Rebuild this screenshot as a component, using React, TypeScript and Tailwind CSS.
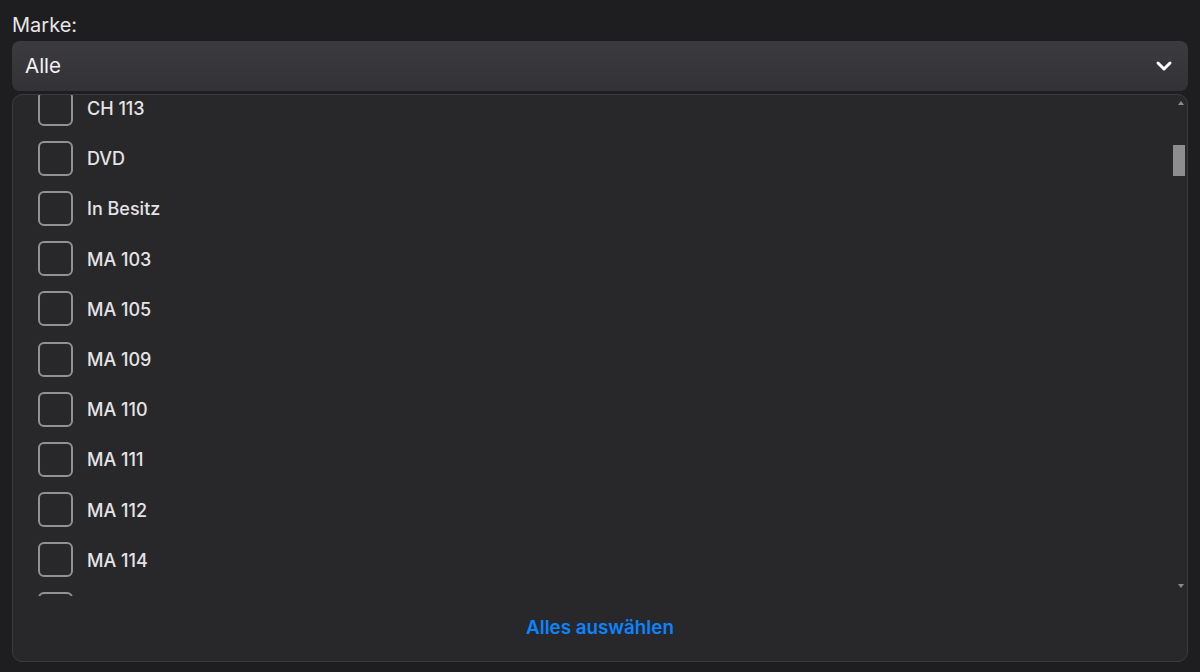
import { ChevronDown } from 'lucide-react';

const items = ['CH 113', 'DVD', 'In Besitz', 'MA 103', 'MA 105', 'MA 109', 'MA 110', 'MA 111', 'MA 112', 'MA 114', ''];

export default function App() {
  return (
    <div className="min-h-screen bg-[#1e1e20] px-3 pt-[13px] font-['Inter',sans-serif]">
      <label className="block text-[20px] leading-[24px] text-[#e6e6e8] mb-[4px]">Marke:</label>

      <button className="w-full h-[50px] rounded-[8px] bg-gradient-to-b from-[#3b3a3f] to-[#333237] flex items-center justify-between pl-[13px] pr-[12px] text-[20.5px] text-[#f2f2f4]">
        <span className="pt-[1px]">Alle</span>
        <ChevronDown size={24} strokeWidth={3} className="text-white" />
      </button>

      <div className="mt-[3px] rounded-[10px] border border-[#3b3b3e] bg-[#28282a] overflow-hidden">
        <div className="relative h-[501px] overflow-hidden">
          <ul className="mt-[-12px] pl-[25px]">
            {items.map((item, i) => (
              <li key={i} className="h-[50.2px] flex items-center gap-[14px]">
                <span className="w-[35px] h-[35px] rounded-[6px] border-2 border-[#929296] shrink-0" />
                {item && <span className="text-[18px] font-medium text-[#e4e4e6] pt-[1px]">{item}</span>}
              </li>
            ))}
          </ul>
          {/* scrollbar */}
          <div className="absolute right-[3px] top-[6px] w-0 h-0 border-l-[3px] border-r-[3px] border-b-[4px] border-l-transparent border-r-transparent border-b-[#8a8a8c]" />
          <div className="absolute right-[2px] top-[50px] w-[12px] h-[31px] bg-[#8d8d8f]" />
          <div className="absolute right-[3px] bottom-[8px] w-0 h-0 border-l-[3px] border-r-[3px] border-t-[4px] border-l-transparent border-r-transparent border-t-[#8a8a8c]" />
        </div>
        <div className="h-[65px] flex items-center justify-center text-[18.8px] font-semibold text-[#0a84ff]">
          Alles auswählen
        </div>
      </div>
    </div>
  );
}
